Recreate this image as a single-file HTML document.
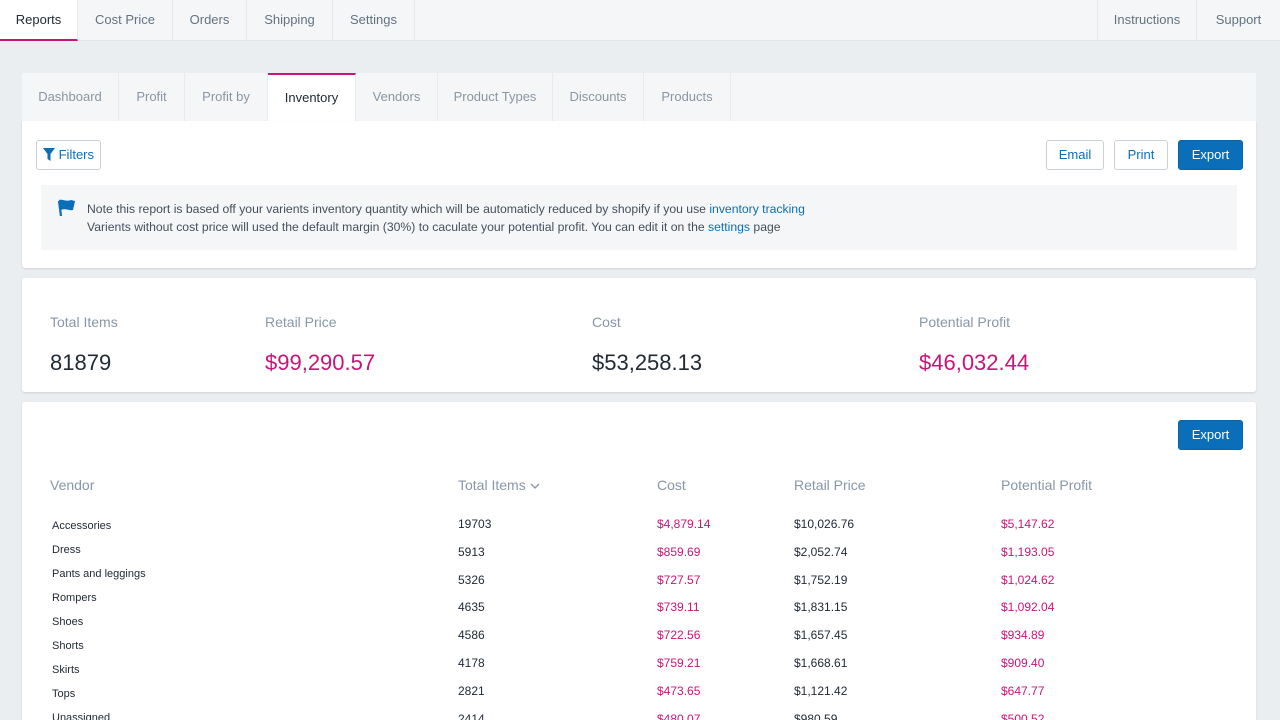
<!DOCTYPE html>
<html style="width:1280px;height:720px;overflow:hidden"><head><meta charset="utf-8"><style>
*{margin:0;padding:0;box-sizing:border-box}
body{width:1280px;height:720px;overflow:hidden;background:#ebeef1;font-family:"Liberation Sans",sans-serif;position:relative;color:#212b36}
.a{position:absolute;white-space:nowrap}
.top{position:absolute;left:0;top:0;width:1280px;height:41px;background:#f4f6f8;border-bottom:1px solid #e3e6e9}
.tt{position:absolute;top:0;height:41px;line-height:40px;text-align:center;font-size:13px;color:#637381;border-right:1px solid #e6e9ec}
.sub{position:absolute;left:22px;top:73px;width:1234px;height:48px;background:#f4f6f8}
.st{position:absolute;top:0;height:48px;line-height:48px;text-align:center;font-size:13px;color:#8a96a3;border-right:1px solid #e8eaed}
.card{position:absolute;left:22px;width:1234px;background:#fff;border-radius:3px;box-shadow:0 1px 2px rgba(0,0,0,.12)}
.btn{position:absolute;height:30px;line-height:28px;border:1px solid #c9d0d6;border-radius:3px;background:#fff;color:#0a6fb8;font-size:13px;text-align:center}
.pri{background:#0a6fb8;border-color:#0a64a8;color:#fff}
.lbl{font-size:14px;color:#8797a8}
.big{font-size:22px}
.pk{color:#c8157a}
.n{font-size:11px;color:#212b36}
.v{font-size:12px}
</style></head><body>
<div class="top">
<div class="tt" style="left:0;width:78px;color:#212b36;background:#fff;border-bottom:2px solid #c8157a">Reports</div>
<div class="tt" style="left:78px;width:95px">Cost Price</div>
<div class="tt" style="left:173px;width:74px">Orders</div>
<div class="tt" style="left:247px;width:86px">Shipping</div>
<div class="tt" style="left:333px;width:82px">Settings</div>
<div class="tt" style="left:1097px;width:100px;border-left:1px solid #e6e9ec">Instructions</div>
<div class="tt" style="left:1197px;width:83px;border-right:0">Support</div>
</div>
<div class="sub">
<div class="st" style="left:0;width:97px">Dashboard</div>
<div class="st" style="left:97px;width:66px">Profit</div>
<div class="st" style="left:163px;width:83px">Profit by</div>
<div class="st" style="left:246px;width:88px;background:#fff;color:#212b36;border-top:2px solid #c8157a;line-height:46px">Inventory</div>
<div class="st" style="left:334px;width:82px">Vendors</div>
<div class="st" style="left:416px;width:115px">Product Types</div>
<div class="st" style="left:531px;width:91px">Discounts</div>
<div class="st" style="left:622px;width:87px">Products</div>
</div>
<div class="card" style="top:121px;height:147px;border-radius:0 0 3px 3px">
<div class="btn" style="left:14px;top:19px;width:65px;font-size:13px"><svg width="12" height="13" viewBox="0 0 12 13" style="vertical-align:-2px"><path d="M0 0h12L7.5 6v7L4.5 11V6z" fill="#0a6fb8"/></svg> Filters</div>
<div class="btn" style="left:1024px;top:19px;width:58px">Email</div>
<div class="btn" style="left:1092px;top:19px;width:54px">Print</div>
<div class="btn pri" style="left:1156px;top:19px;width:65px">Export</div>
<div class="a" style="left:19px;top:64px;width:1196px;height:65px;background:#f4f6f8"></div>
<svg class="a" style="left:35px;top:78px" width="20" height="18" viewBox="0 0 20 18"><path d="M2 2l2 15" stroke="#0a6fb8" stroke-width="2.2"/><path d="M2 1c4-1 7 2 12 0l4 1-2 9c-4 1-7-2-12 0z" fill="#0a6fb8"/></svg>
<div class="a" style="left:65px;top:79px;font-size:12.2px;color:#454f5b;line-height:18px">Note this report is based off your varients inventory quantity which will be automaticly reduced by shopify if you use <span style="color:#0a6fb8">inventory tracking</span><br>Varients without cost price will used the default margin (30%) to caculate your potential profit. You can edit it on the <span style="color:#0a6fb8">settings</span> page</div>
</div>
<div class="card" style="top:278px;height:114px">
<div class="a lbl" style="left:28px;top:36px">Total Items</div>
<div class="a lbl" style="left:243px;top:36px">Retail Price</div>
<div class="a lbl" style="left:570px;top:36px">Cost</div>
<div class="a lbl" style="left:897px;top:36px">Potential Profit</div>
<div class="a big" style="left:28px;top:72px">81879</div>
<div class="a big pk" style="left:243px;top:72px">$99,290.57</div>
<div class="a big" style="left:570px;top:72px">$53,258.13</div>
<div class="a big pk" style="left:897px;top:72px">$46,032.44</div>
</div>
<div class="card" style="top:402px;height:318px;border-radius:3px 3px 0 0">
<div class="btn pri" style="left:1156px;top:18px;width:65px">Export</div>
<div class="a lbl" style="left:28px;top:75px">Vendor</div>
<div class="a lbl" style="left:436px;top:75px">Total Items <svg width="10" height="7" viewBox="0 0 10 7"><path d="M1 1l4 4 4-4" stroke="#8797a8" fill="none" stroke-width="1.3"/></svg></div>
<div class="a lbl" style="left:635px;top:75px">Cost</div>
<div class="a lbl" style="left:772px;top:75px">Retail Price</div>
<div class="a lbl" style="left:979px;top:75px">Potential Profit</div>
<div class="a n" style="left:30px;top:118px">Accessories</div>
<div class="a n" style="left:30px;top:142px">Dress</div>
<div class="a n" style="left:30px;top:166px">Pants and leggings</div>
<div class="a n" style="left:30px;top:190px">Rompers</div>
<div class="a n" style="left:30px;top:214px">Shoes</div>
<div class="a n" style="left:30px;top:238px">Shorts</div>
<div class="a n" style="left:30px;top:262px">Skirts</div>
<div class="a n" style="left:30px;top:286px">Tops</div>
<div class="a n" style="left:30px;top:310px">Unassigned</div>
<div class="a v" style="left:436px;top:109px;line-height:27.8px">19703<br>5913<br>5326<br>4635<br>4586<br>4178<br>2821<br>2414</div>
<div class="a v pk" style="left:635px;top:109px;line-height:27.8px">$4,879.14<br>$859.69<br>$727.57<br>$739.11<br>$722.56<br>$759.21<br>$473.65<br>$480.07</div>
<div class="a v" style="left:772px;top:109px;line-height:27.8px">$10,026.76<br>$2,052.74<br>$1,752.19<br>$1,831.15<br>$1,657.45<br>$1,668.61<br>$1,121.42<br>$980.59</div>
<div class="a v pk" style="left:979px;top:109px;line-height:27.8px">$5,147.62<br>$1,193.05<br>$1,024.62<br>$1,092.04<br>$934.89<br>$909.40<br>$647.77<br>$500.52</div>
</div>
</body></html>
